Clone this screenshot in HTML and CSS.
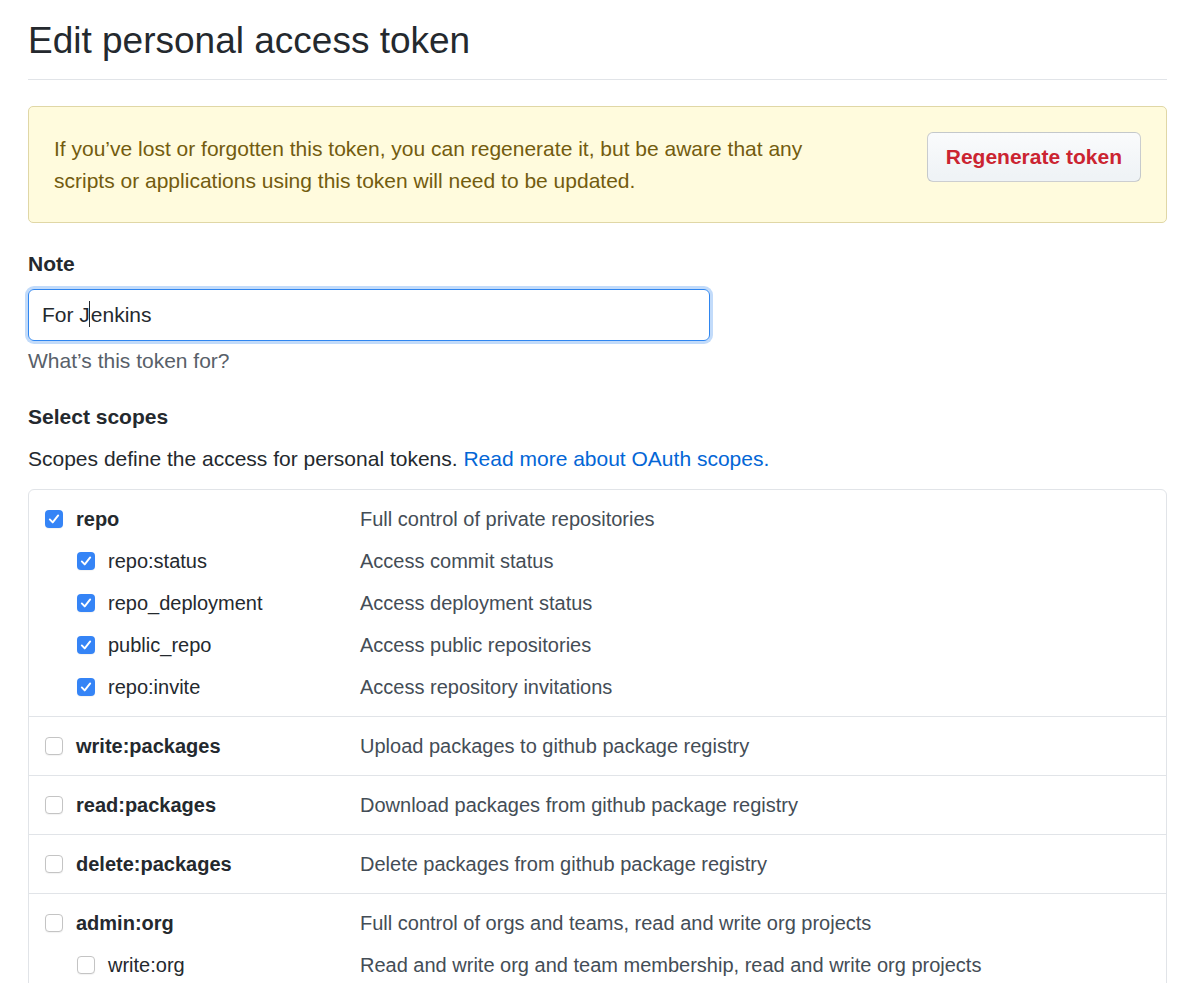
FILE: index.html
```html
<!DOCTYPE html>
<html lang="en">
<head>
    <meta charset="UTF-8">
    <meta name="viewport" content="width=device-width, initial-scale=1.0">
    <title>Edit personal access token</title>
    <link rel="stylesheet" href="styles.css">
</head>
<body>
<div class="page">
    <div class="subhead">
        <h1>Edit personal access token</h1>
    </div>

    <div class="flash">
        <p>If you’ve lost or forgotten this token, you can regenerate it, but be aware that any scripts or applications using this token will need to be updated.</p>
        <button type="button" class="btn-danger">Regenerate token</button>
    </div>

    <div class="form-group">
        <label for="note">Note</label>
        <div class="field" id="note" contenteditable="true">For J<span class="caret"></span>enkins</div>
        <p class="hint">What’s this token for?</p>
    </div>

    <h3>Select scopes</h3>
    <p class="intro">Scopes define the access for personal tokens. <a href="#">Read more about OAuth scopes.</a></p>

    <div class="scopes">
        <div class="scope-group">
            <div class="scope-row">
                <span class="scope-name"><span class="box checked"><svg viewBox="0 0 18 18"><path d="M4.8 9.4l2.9 3L13.2 5.4"/></svg></span>repo</span>
                <span class="scope-desc">Full control of private repositories</span>
            </div>
            <div class="scope-row child">
                <span class="scope-name"><span class="box checked"><svg viewBox="0 0 18 18"><path d="M4.8 9.4l2.9 3L13.2 5.4"/></svg></span>repo:status</span>
                <span class="scope-desc">Access commit status</span>
            </div>
            <div class="scope-row child">
                <span class="scope-name"><span class="box checked"><svg viewBox="0 0 18 18"><path d="M4.8 9.4l2.9 3L13.2 5.4"/></svg></span>repo_deployment</span>
                <span class="scope-desc">Access deployment status</span>
            </div>
            <div class="scope-row child">
                <span class="scope-name"><span class="box checked"><svg viewBox="0 0 18 18"><path d="M4.8 9.4l2.9 3L13.2 5.4"/></svg></span>public_repo</span>
                <span class="scope-desc">Access public repositories</span>
            </div>
            <div class="scope-row child">
                <span class="scope-name"><span class="box checked"><svg viewBox="0 0 18 18"><path d="M4.8 9.4l2.9 3L13.2 5.4"/></svg></span>repo:invite</span>
                <span class="scope-desc">Access repository invitations</span>
            </div>
        </div>
        <div class="scope-group">
            <div class="scope-row">
                <span class="scope-name"><span class="box"></span>write:packages</span>
                <span class="scope-desc">Upload packages to github package registry</span>
            </div>
        </div>
        <div class="scope-group">
            <div class="scope-row">
                <span class="scope-name"><span class="box"></span>read:packages</span>
                <span class="scope-desc">Download packages from github package registry</span>
            </div>
        </div>
        <div class="scope-group">
            <div class="scope-row">
                <span class="scope-name"><span class="box"></span>delete:packages</span>
                <span class="scope-desc">Delete packages from github package registry</span>
            </div>
        </div>
        <div class="scope-group">
            <div class="scope-row">
                <span class="scope-name"><span class="box"></span>admin:org</span>
                <span class="scope-desc">Full control of orgs and teams, read and write org projects</span>
            </div>
            <div class="scope-row child">
                <span class="scope-name"><span class="box"></span>write:org</span>
                <span class="scope-desc">Read and write org and team membership, read and write org projects</span>
            </div>
        </div>
    </div>
</div>
</body>
</html>
```

FILE: styles.css
```css
body {
    margin: 0;
    font-family: "Liberation Sans", Arial, sans-serif;
    color: #24292e;
    background-color: #fff;
}
.page {
    padding: 0 33px 0 28px;
}
.subhead {
    padding: 18px 0 16px;
    border-bottom: 1px solid #e1e4e8;
}
h1 {
    margin: 0;
    font-size: 37px;
    font-weight: normal;
    line-height: 45px;
}
.flash {
    margin-top: 26px;
    display: flex;
    justify-content: space-between;
    align-items: flex-start;
    padding: 25px;
    background-color: #fffbdd;
    border: 1px solid #e0d7a6;
    border-radius: 5px;
}
.flash p {
    margin: 1px 0 0;
    max-width: 800px;
    font-size: 21px;
    line-height: 32px;
    color: #735c0f;
}
.btn-danger {
    font-family: inherit;
    font-size: 21px;
    font-weight: bold;
    line-height: 30px;
    color: #cb2431;
    padding: 9px 18px;
    border: 1px solid rgba(27, 31, 35, 0.2);
    border-radius: 6px;
    background-image: linear-gradient(-180deg, #fafbfc 0%, #eff3f6 90%);
    cursor: pointer;
}
.form-group {
    margin-top: 26px;
}
label {
    display: block;
    font-size: 21px;
    font-weight: bold;
    line-height: 30px;
}
.field {
    margin-top: 10px;
    box-sizing: border-box;
    width: 682px;
    height: 52px;
    padding: 0 13px;
    font-size: 21px;
    line-height: 50px;
    border: 1px solid #2f86f0;
    border-radius: 6px;
    box-shadow: 0 0 0 3px #c2dbfa;
    outline: none;
}
.caret {
    display: inline-block;
    width: 1px;
    height: 26px;
    margin: 0 1px 0 -1px;
    vertical-align: -5px;
    background-color: #24292e;
}
.hint {
    margin: 5px 0 0;
    font-size: 21px;
    line-height: 30px;
    color: #586069;
}
h3 {
    margin: 26px 0 0;
    font-size: 21px;
    line-height: 30px;
}
.intro {
    margin: 12px 0 0;
    font-size: 21px;
    line-height: 30px;
}
.intro a {
    color: #0366d6;
    text-decoration: none;
}
.scopes {
    margin-top: 15px;
    border: 1px solid #e1e4e8;
    border-radius: 6px;
}
.scope-group {
    padding: 8px 0;
}
.scope-group + .scope-group {
    border-top: 1px solid #e1e4e8;
}
.scope-row {
    display: flex;
    align-items: center;
    height: 42px;
    padding-left: 16px;
    font-size: 20px;
}
.scope-name {
    display: flex;
    align-items: center;
    gap: 13px;
    box-sizing: border-box;
    width: 315px;
    font-weight: bold;
}
.child .scope-name {
    padding-left: 32px;
    font-weight: normal;
}
.scope-desc {
    color: #444d56;
}
.box {
    box-sizing: border-box;
    width: 18px;
    height: 18px;
    flex-shrink: 0;
    border: 1px solid #c4c4c4;
    border-radius: 4px;
    background-color: #fff;
    box-shadow: 0 1px 1px rgba(0, 0, 0, 0.05);
}
.box.checked {
    border: none;
    background-color: #3584f6;
}
.box svg {
    display: block;
    width: 18px;
    height: 18px;
    fill: none;
    stroke: #fff;
    stroke-width: 1.9;
    stroke-linecap: round;
    stroke-linejoin: round;
}
```
